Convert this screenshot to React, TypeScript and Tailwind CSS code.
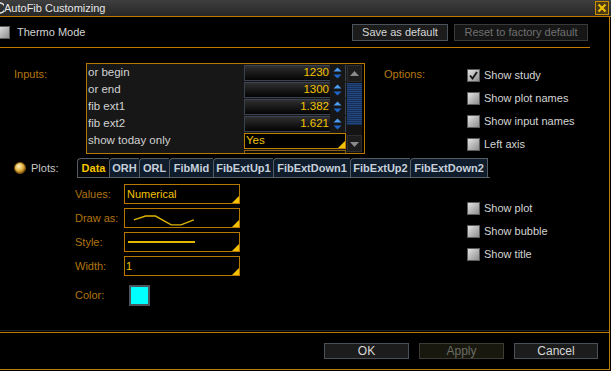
import React from 'react';

const inputs = [
  { label: 'or begin', value: '1230' },
  { label: 'or end', value: '1300' },
  { label: 'fib ext1', value: '1.382' },
  { label: 'fib ext2', value: '1.621' },
];

const tabs = [
  { name: 'Data', w: 'w-[32px]' },
  { name: 'ORH', w: 'w-[30px]' },
  { name: 'ORL', w: 'w-[30px]' },
  { name: 'FibMid', w: 'w-[44px]' },
  { name: 'FibExtUp1', w: 'w-[60px]' },
  { name: 'FibExtDown1', w: 'w-[77px]' },
  { name: 'FibExtUp2', w: 'w-[60px]' },
  { name: 'FibExtDown2', w: 'w-[78px]' },
];

const CheckBox = ({ checked }: { checked?: boolean }) => (
  <span className="w-[13px] h-[13px] shrink-0 border border-[#5c5c5c] bg-linear-to-br from-[#e4e4e4] to-[#8e8e8e] flex items-center justify-center">
    {checked && (
      <svg width="9" height="9" viewBox="0 0 9 9">
        <path d="M1 4.5 L3.5 7.5 L8 1" fill="none" stroke="#111" strokeWidth="1.8" />
      </svg>
    )}
  </span>
);

const CheckRow = ({ label, checked }: { label: string; checked?: boolean }) => (
  <div className="flex items-center h-[13px] gap-[4px] text-[#d4d4d4]">
    <CheckBox checked={checked} />
    <span className="leading-none">{label}</span>
  </div>
);

// little yellow corner that marks a dropdown field
const Corner = () => (
  <svg className="absolute right-0 bottom-0" width="7" height="7" viewBox="0 0 7 7">
    <polygon points="7,0 7,7 0,7" fill="#f2c200" />
  </svg>
);

const Spinner = () => (
  <svg width="15" height="16" viewBox="0 0 15 16" className="shrink-0">
    <rect x="0" y="0" width="15" height="16" fill="#161616" />
    <polygon points="3.5,6.5 11.5,6.5 7.5,2.5" fill="#4a9af0" />
    <polygon points="3.5,9.5 11.5,9.5 7.5,13.5" fill="#1e66c8" />
  </svg>
);

const FieldBox = ({ children }: { children?: React.ReactNode }) => (
  <div className="relative w-[116px] h-[20px] border border-[#b87800] bg-black flex items-center">
    {children}
    <Corner />
  </div>
);

export default function App() {
  return (
    <div className="w-[611px] h-[371px] bg-black overflow-hidden flex flex-col text-[11px] text-[#d4d4d4] font-['Liberation_Sans',Arial,sans-serif]">
      {/* title bar */}
      <div className="h-[17px] shrink-0 flex items-center border-b border-[#c07c00] bg-linear-to-b from-[#3e3e3e] to-[#272727]">
        <svg width="4" height="12" viewBox="0 0 4 12" className="shrink-0">
          <path d="M0 1 A5 5 0 0 1 0 11" fill="none" stroke="#e8e8e8" strokeWidth="1.4" />
        </svg>
        <span className="text-[#e6e6e6] leading-none">AutoFib Customizing</span>
        <div className="ml-auto mr-[2px] w-[14px] h-[14px] border border-[#c89000] bg-[#4a3a18] flex items-center justify-center">
          <svg width="10" height="10" viewBox="0 0 10 10">
            <path d="M1.5 1.5 L8.5 8.5 M8.5 1.5 L1.5 8.5" stroke="#f0c400" strokeWidth="2" />
          </svg>
        </div>
      </div>

      {/* body */}
      <div className="flex-1 flex flex-col border-r border-b border-[#c07c00] mr-[1px] mb-[1px] min-h-0">
        {/* thermo row */}
        <div className="h-[30px] shrink-0 flex items-center pr-[21px]">
          <div className="-ml-[3px]">
            <CheckBox />
          </div>
          <span className="ml-[7px] text-[#d4d4d4]">Thermo Mode</span>
          <div className="ml-auto flex gap-[6px]">
            <button className="w-[96px] h-[17px] border border-[#4c535b] bg-[#1c1c1c] text-[#d6d6d6] leading-none">
              Save as default
            </button>
            <button className="w-[134px] h-[17px] border border-[#3a3a3a] bg-[#161616] text-[#707070] leading-none">
              Reset to factory default
            </button>
          </div>
        </div>
        <div className="h-[1px] w-[590px] bg-[#c07c00] shrink-0" />

        {/* inputs + options */}
        <div className="mt-[15px] flex shrink-0">
          <div className="w-[86px] pl-[14px] pt-[3px] text-[#b87810]">Inputs:</div>
          <div className="w-[279px] h-[91px] border border-[#b87800] flex overflow-hidden">
            <div className="flex-1 flex flex-col bg-[#171717]">
              {inputs.map((it) => (
                <div key={it.label} className="h-[17px] shrink-0 flex items-end">
                  <span className="flex-1 pl-[1px] self-center pt-[1px] text-[11.5px] text-[#d2d2d2]">{it.label}</span>
                  <div className="w-[102px] h-[16px] mr-[1px] border border-[#3b4352] bg-linear-to-b from-[#303030] to-[#050505] flex items-center">
                    <span className="flex-1 text-right pr-[1px] text-[#f2c200] text-[11.5px] leading-none">{it.value}</span>
                    <Spinner />
                  </div>
                </div>
              ))}
              <div className="h-[17px] shrink-0 flex items-end">
                <span className="flex-1 pl-[1px] self-center pt-[1px] text-[11.5px] text-[#d2d2d2]">show today only</span>
                <div className="relative w-[102px] h-[16px] mr-[1px] border border-[#c08000] bg-black flex items-center">
                  <span className="pl-[1px] text-[#f2c200] text-[11.5px] leading-none">Yes</span>
                  <Corner />
                </div>
              </div>
              <div className="h-[4px] shrink-0 flex items-end">
                <span className="flex-1" />
                <div className="w-[102px] h-[3px] mr-[1px] border-t border-x border-[#8a6010] bg-[#0c0c0c]" />
              </div>
            </div>
            {/* scrollbar */}
            <div className="w-[15px] mr-[2px] flex flex-col bg-[#0e0e0e]">
              <div className="h-[17px] mt-[1px] border border-[#2e2e2e] bg-[#1c1c1c] flex items-center justify-center">
                <svg width="9" height="6" viewBox="0 0 9 6">
                  <polygon points="0,5 9,5 4.5,0" fill="#8a8a8a" />
                </svg>
              </div>
              <div className="h-[42px] mt-[1px] bg-[image:repeating-linear-gradient(to_bottom,#23477c_0px,#23477c_1px,#17305a_1px,#17305a_2px)]" />
              <div className="h-[10px] bg-[#141414]" />
              <div className="h-[17px] border border-[#2e2e2e] bg-[#1c1c1c] flex items-center justify-center">
                <svg width="9" height="6" viewBox="0 0 9 6">
                  <polygon points="0,1 9,1 4.5,6" fill="#8a8a8a" />
                </svg>
              </div>
            </div>
          </div>
          <div className="w-[102px] pl-[19px] pt-[3px] text-[#b87810]">Options:</div>
          <div className="pt-[6px] flex flex-col gap-[10px]">
            <CheckRow label="Show study" checked />
            <CheckRow label="Show plot names" />
            <CheckRow label="Show input names" />
            <CheckRow label="Left axis" />
          </div>
        </div>

        {/* plots tabs */}
        <div className="mt-[4px] h-[20px] shrink-0 flex items-end">
          <div className="w-[77px] h-full pl-[14px] flex items-center gap-[5px]">
            <svg width="12" height="12" viewBox="0 0 12 12">
              <defs>
                <radialGradient id="rg" cx="40%" cy="35%" r="65%">
                  <stop offset="0%" stopColor="#fff4c0" />
                  <stop offset="60%" stopColor="#e0b040" />
                  <stop offset="100%" stopColor="#8a5a08" />
                </radialGradient>
              </defs>
              <circle cx="6" cy="6" r="5.5" fill="url(#rg)" stroke="#7a5210" strokeWidth="1" />
            </svg>
            <span className="text-[#c8c8c8]">Plots:</span>
          </div>
          <div className="w-[413px] h-full flex items-end border-b border-[#5a6068]">
            {tabs.map((t, i) => (
              <div
                key={t.name}
                className={`${t.w} h-[19px] shrink-0 flex items-center justify-center font-bold border-t border-l border-[#565c64] rounded-tl-[4px] ${
                  i === 0 ? 'bg-[#070707] text-[#f6c400]' : 'bg-[#0f1c2c] text-[#c6d0da]'
                } ${i === tabs.length - 1 ? 'border-r' : ''}`}
              >
                {t.name}
              </div>
            ))}
          </div>
        </div>

        {/* plot settings */}
        <div className="mt-[6px] flex shrink-0">
          <div className="w-[467px] pl-[75px] flex flex-col">
            <div className="flex flex-col gap-[4px]">
              <div className="flex items-center">
                <span className="w-[49px] text-[#b07410]">Values:</span>
                <FieldBox>
                  <span className="pl-[2px] text-[#f2c200] leading-none">Numerical</span>
                </FieldBox>
              </div>
              <div className="flex items-center">
                <span className="w-[49px] text-[#b07410]">Draw as:</span>
                <FieldBox>
                  <svg width="116" height="18" viewBox="0 0 116 18">
                    <polyline
                      points="9,11 21,7 31,7 47,16 57,16 70,11"
                      fill="none"
                      stroke="#dcb400"
                      strokeWidth="1.4"
                    />
                  </svg>
                </FieldBox>
              </div>
              <div className="flex items-center">
                <span className="w-[49px] text-[#b07410]">Style:</span>
                <FieldBox>
                  <div className="ml-[3px] w-[67px] h-[1.5px] bg-[#e0b800]" />
                </FieldBox>
              </div>
              <div className="flex items-center">
                <span className="w-[49px] text-[#b07410]">Width:</span>
                <FieldBox>
                  <span className="pl-[1px] text-[#f2c200] leading-none">1</span>
                </FieldBox>
              </div>
            </div>
            <div className="mt-[9px] flex items-center">
              <span className="w-[54px] text-[#b07410]">Color:</span>
              <div className="w-[21px] h-[21px] border-2 border-[#4e545c] bg-[#00ffff]" />
            </div>
          </div>
          <div className="pt-[18px] flex flex-col gap-[10px]">
            <CheckRow label="Show plot" />
            <CheckRow label="Show bubble" />
            <CheckRow label="Show title" />
          </div>
        </div>

        <div className="flex-1" />

        {/* footer */}
        <div className="shrink-0 border-t border-[#1e2328]">
          <div className="mt-[1px] h-[1px] bg-[#c07c00]" />
          <div className="pt-[10px] pb-[10px] pr-[11px] flex justify-end gap-[10px]">
            <button className="w-[85px] h-[16px] border border-[#4a5057] bg-[#1c1c1c] text-[#d8d8d8] text-[12px] leading-none">
              OK
            </button>
            <button className="w-[85px] h-[16px] border border-[#3c3c34] bg-[#18180f] text-[#6c6c64] text-[12px] leading-none">
              Apply
            </button>
            <button className="w-[84px] h-[16px] border border-[#4a5057] bg-[#1c1c1c] text-[#d8d8d8] text-[12px] leading-none">
              Cancel
            </button>
          </div>
        </div>
      </div>
    </div>
  );
}
